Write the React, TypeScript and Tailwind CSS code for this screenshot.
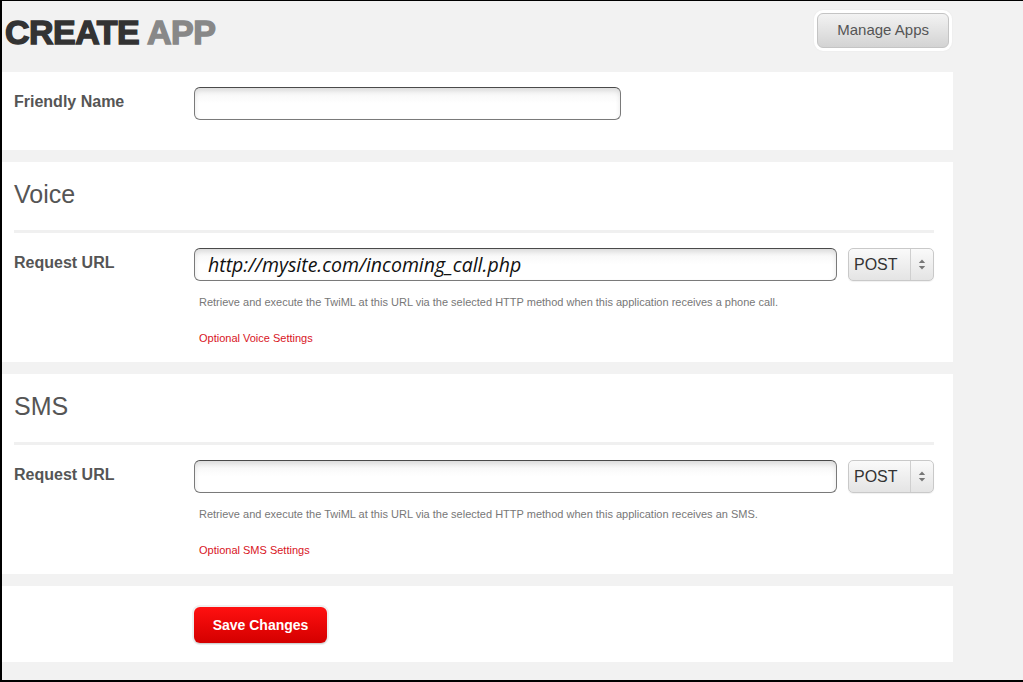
import React from 'react';

// Small up/down arrows for the method select
const SelectArrows = () => (
    <svg width="8" height="11" viewBox="0 0 8 11" xmlns="http://www.w3.org/2000/svg">
        <path d="M4 0.5 L7.2 4 L0.8 4 Z" fill="#777" />
        <path d="M4 10.5 L7.2 7 L0.8 7 Z" fill="#777" />
    </svg>
);

const inputClass =
    'h-[33px] rounded-[6px] border border-[#7a7a7a] border-t-[#4a4a4a] bg-gradient-to-b from-[#f4f4f4] via-white to-white shadow-[inset_0_3px_5px_rgba(0,0,0,0.10)]';

const MethodSelect = () => (
    <div className="flex h-[33px] w-[86px] items-center rounded-[5px] border border-[#c9c9c9] bg-gradient-to-b from-[#fafafa] to-[#e4e4e4] shadow-[0_1px_1px_rgba(0,0,0,0.06)]">
        <span className="w-[61px] pl-[5px] text-[16px] text-[#333]">POST</span>
        <span className="flex h-full flex-1 items-center justify-center border-l border-[#cfcfcf]">
            <SelectArrows />
        </span>
    </div>
);

interface SectionProps {
    title: string;
    value?: string;
    help: string;
    link: string;
}

const Section: React.FC<SectionProps> = ({ title, value, help, link }) => (
    <div className="h-[200px] bg-white pl-3 pr-[19px] pt-[17px]">
        <h2 className="text-[25px] leading-[30px] text-[#555]">{title}</h2>
        <div className="mt-[21px] h-[3px] bg-[#f0f0f0]" />
        <div className="mt-[15px] flex">
            <div className="mt-[5px] w-[180px] text-[16px] font-bold leading-5 text-[#555]">Request URL</div>
            <div className="flex-1">
                <div className="flex gap-[11px]">
                    <div className={`${inputClass} flex flex-1 items-center pl-[13px]`}>
                        {value && (
                            <span className="font-['Open_Sans',sans-serif] text-[19.5px] italic text-[#111]">{value}</span>
                        )}
                    </div>
                    <MethodSelect />
                </div>
                <p className="mt-[14px] pl-[5px] text-[11px] leading-[14px] text-[#777]">{help}</p>
                <a className="mt-[22px] block pl-[5px] text-[11px] leading-[14px] text-[#d8141e]">{link}</a>
            </div>
        </div>
    </div>
);

export default function App() {
    return (
        <div className="h-[682px] w-[1023px] overflow-hidden border-t border-b-2 border-l-2 border-black bg-[#f2f2f2] font-['Liberation_Sans',Arial,sans-serif]">
            <div className="w-[951px]">
                <div className="flex h-[71px] items-start justify-between">
                    <h1 className="ml-[3px] mt-[14px] text-[34px] font-bold leading-[34px] tracking-[-0.5px] [-webkit-text-stroke:1.4px_currentColor]">
                        <span className="text-[#333]">CREATE</span> <span className="text-[#888]">APP</span>
                    </h1>
                    <div className="mr-[1px] mt-[9px] rounded-[9px] bg-white p-[3px] shadow-[0_0_2px_rgba(0,0,0,0.06)]">
                        <button
                            type="button"
                            className="h-[35px] rounded-[6px] border border-[#c4c4c4] bg-gradient-to-b from-[#f3f3f3] to-[#d3d3d3] px-[19px] text-[15px] text-[#555]"
                        >
                            Manage Apps
                        </button>
                    </div>
                </div>

                <div className="flex flex-col gap-[12px]">
                    <div className="flex h-[78px] bg-white pl-3 pt-[15px]">
                        <div className="mt-[5px] w-[180px] text-[16px] font-bold leading-5 text-[#555]">Friendly Name</div>
                        <div className={`${inputClass} w-[427px]`} />
                    </div>

                    <Section
                        title="Voice"
                        value="http://mysite.com/incoming_call.php"
                        help="Retrieve and execute the TwiML at this URL via the selected HTTP method when this application receives a phone call."
                        link="Optional Voice Settings"
                    />

                    <Section
                        title="SMS"
                        help="Retrieve and execute the TwiML at this URL via the selected HTTP method when this application receives an SMS."
                        link="Optional SMS Settings"
                    />

                    <div className="h-[76px] bg-white pl-[190px] pt-[19px]">
                        <div className="inline-block rounded-[8px] bg-[#f0f0f0] p-[2px]">
                            <button
                                type="button"
                                className="h-[36px] w-[133px] rounded-[6px] bg-gradient-to-b from-[#ff1010] to-[#d40000] text-[14px] font-bold text-white shadow-[0_1px_1px_rgba(0,0,0,0.15)]"
                            >
                                Save Changes
                            </button>
                        </div>
                    </div>
                </div>
            </div>
        </div>
    );
}
